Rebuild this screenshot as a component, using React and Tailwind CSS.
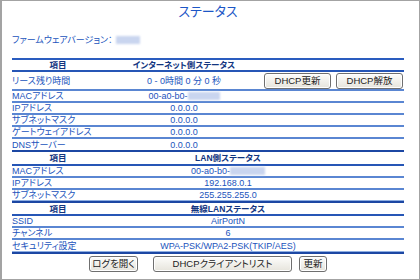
const Btn = ({ children, className = "" }) => (
  <div
    className={
      "h-[16px] flex items-center justify-center rounded-[3px] border border-[#6f6f6f] bg-gradient-to-b from-[#fdfdfb] to-[#e6e4dc] text-[9.5px] leading-[10px] text-[#222] shadow-[inset_0_0_0_1px_#ffffff] " +
      className
    }
  >
    {children}
  </div>
);

const Blur = ({ w }) => (
  <span
    className="inline-block h-[8px] bg-[#c9d5ef] blur-[1px] align-middle"
    style={{ width: w }}
  />
);

const RowLine = () => <div className="h-[2px] bg-[#5a86d2]" />;
const Thick = () => <div className="h-[2px] bg-[#1c47a3]" />;
const HeadLine = () => <div className="h-[2px] bg-[#2656b6]" />;

function Row({ label, value, cols, h = "h-[10px]" }) {
  return (
    <div className={"grid items-center " + cols + " " + h}>
      <div className="text-[9px] leading-[10px] whitespace-nowrap">{label}</div>
      <div className="text-center text-[9px] leading-[10px] whitespace-nowrap">{value}</div>
      <div />
    </div>
  );
}

function Head({ title, cols, h }) {
  return (
    <div className={"grid items-center font-bold text-[8.5px] leading-[10px] text-[#12357f] " + cols + " " + h}>
      <div className="text-center">項目</div>
      <div className="text-center whitespace-nowrap">{title}</div>
      <div />
    </div>
  );
}

export default function App() {
  const ic = "grid-cols-[92px_160px_140px]";
  const lc = "grid-cols-[92px_248px_52px]";
  return (
    <div className="w-[420px] h-[280px] bg-white border border-l-2 border-[#a3a3a3] font-['Liberation_Sans','Noto_Sans_CJK_JP',sans-serif] [font-feature-settings:'palt'] text-[#2153bc] overflow-hidden">
      <div className="ml-[10px] w-[392px]">
        <div className="h-[19px] pt-[3px] text-center text-[13px] leading-[16px] text-[#1c56c6]">
          ステータス
        </div>
        <div className="mt-[14px] h-[12px] text-[9px] leading-[12px] flex items-center gap-[3px]">
          <span>ファームウェアバージョン：</span>
          <Blur w={24} />
        </div>
        <div className="mt-[12px]">
          <div className="h-[2px] bg-[#2a5cbf]" />
          <Head title="インターネット側ステータス" cols={ic} h="h-[10px]" />
          <HeadLine />
          <div className={"grid items-center h-[17px] " + ic}>
            <div className="text-[9px] leading-[10px]">リース残り時間</div>
            <div className="text-center text-[9px] leading-[10px] whitespace-nowrap">0 - 0時間 0 分 0 秒</div>
            <div className="flex justify-end gap-[5px] pr-[1px]">
              <Btn className="w-[67px]">DHCP更新</Btn>
              <Btn className="w-[67px]">DHCP解放</Btn>
            </div>
          </div>
          <RowLine />
          <Row cols={ic} label="MACアドレス" value={<span className="inline-flex items-center">00-a0-b0-<Blur w={32} /></span>} />
          <RowLine />
          <Row cols={ic} label="IPアドレス" value="0.0.0.0" />
          <RowLine />
          <Row cols={ic} label="サブネットマスク" value="0.0.0.0" />
          <RowLine />
          <Row cols={ic} label="ゲートウェイアドレス" value="0.0.0.0" />
          <RowLine />
          <Row cols={ic} label="DNSサーバー" value="0.0.0.0" h="h-[11px]" />
          <Thick />
          <Head title="LAN側ステータス" cols={lc} h="h-[12px]" />
          <HeadLine />
          <Row cols={lc} label="MACアドレス" value={<span className="inline-flex items-center">00-a0-b0-<Blur w={35} /></span>} />
          <RowLine />
          <Row cols={lc} label="IPアドレス" value="192.168.0.1" />
          <RowLine />
          <Row cols={lc} label="サブネットマスク" value="255.255.255.0" />
          <div className="h-[1px] bg-[#8eaee2]" />
          <Thick />
          <Head title="無線LANステータス" cols={lc} h="h-[11px]" />
          <HeadLine />
          <Row cols={lc} label="SSID" value="AirPortN" />
          <RowLine />
          <Row cols={lc} label="チャンネル" value="6" />
          <RowLine />
          <Row cols={lc} label="セキュリティ設定" value="WPA-PSK/WPA2-PSK(TKIP/AES)" h="h-[11px]" />
          <div className="h-[1px] bg-[#8eaee2]" />
          <Thick />
        </div>
        <div className="mt-[2px] flex ml-[77px]">
          <Btn className="w-[49px]">ログを開く</Btn>
          <Btn className="w-[139px] ml-[15px]">DHCPクライアントリスト</Btn>
          <Btn className="w-[28px] ml-[7px]">更新</Btn>
        </div>
      </div>
    </div>
  );
}
